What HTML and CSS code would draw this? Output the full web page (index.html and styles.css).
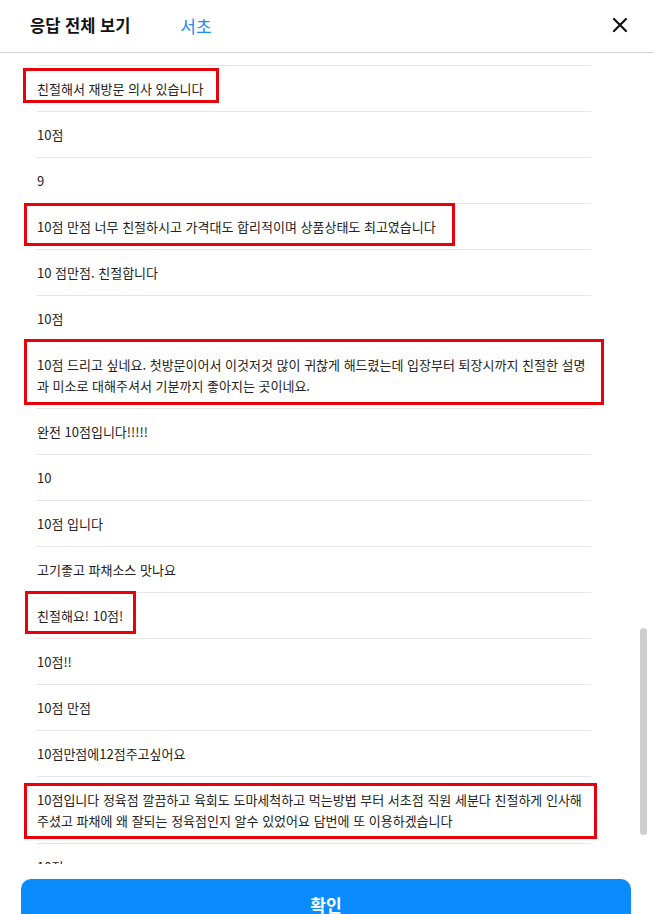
FILE: index.html
```html
<!DOCTYPE html>
<html lang="ko">

<head>
  <meta charset="UTF-8" />
  <title>응답 전체 보기</title>
  <meta name="viewport" content="width=device-width, initial-scale=1.0" />
  <link rel="stylesheet" href="styles.css">
</head>

<body>

  <div class="modal">
    <div class="modal-header">
      <h2>응답 전체 보기</h2>
      <span class="branch">서초</span>
      <button class="close-btn" aria-label="닫기">
        <svg width="16" height="16" viewBox="0 0 16 16">
          <path d="M2 2 L14 14 M14 2 L2 14" stroke="#111" stroke-width="2.2" stroke-linecap="round" fill="none" />
        </svg>
      </button>
    </div>

    <div class="answers">
      <ul class="answer-list">
        <li class="answer spacer"></li>
        <li class="answer">친절해서 재방문 의사 있습니다<span class="mark mark-1"></span></li>
        <li class="answer">10점</li>
        <li class="answer">9</li>
        <li class="answer">10점 만점 너무 친절하시고 가격대도 합리적이며 상품상태도 최고였습니다<span class="mark mark-2"></span></li>
        <li class="answer">10 점만점. 친절합니다</li>
        <li class="answer">10점</li>
        <li class="answer">10점 드리고 싶네요. 첫방문이어서 이것저것 많이 귀찮게 해드렸는데 입장부터 퇴장시까지 친절한 설명과 미소로 대해주셔서 기분까지 좋아지는 곳이네요.<span class="mark mark-3"></span></li>
        <li class="answer">완전 10점입니다!!!!!</li>
        <li class="answer">10</li>
        <li class="answer">10점 입니다</li>
        <li class="answer">고기좋고 파채소스 맛나요</li>
        <li class="answer">친절해요! 10점!<span class="mark mark-4"></span></li>
        <li class="answer">10점!!</li>
        <li class="answer">10점 만점</li>
        <li class="answer">10점만점에12점주고싶어요</li>
        <li class="answer">10점입니다 정육점 깔끔하고 육회도 도마세척하고 먹는방법 부터 서초점 직원 세분다 친절하게 인사해주셨고 파채에 왜 잘되는 정육점인지 알수 있었어요 담번에 또 이용하겠습니다<span class="mark mark-5"></span></li>
        <li class="answer">10점</li>
      </ul>
      <div class="scroll-thumb"></div>
    </div>

    <div class="modal-footer">
      <button class="confirm-btn">확인</button>
    </div>
  </div>

</body>

</html>
```

FILE: styles.css
```css
* {
  box-sizing: border-box;
}

body {
  margin: 0;
  padding: 0;
  font-family: "Noto Sans CJK KR", "Noto Sans", sans-serif;
  background-color: #fff;
  color: #222;
}

.modal {
  width: 654px;
  height: 914px;
  display: flex;
  flex-direction: column;
  overflow: hidden;
}

.modal-header {
  height: 53px;
  flex-shrink: 0;
  display: flex;
  align-items: center;
  padding: 0 22px 2px 30px;
  border-bottom: 1px solid #d4d4d4;
}

.modal-header h2 {
  margin: 0;
  font-size: 16.5px;
  font-weight: 700;
  color: #111;
}

.branch {
  margin-left: 50px;
  font-size: 17px;
  color: #1a8cf0;
}

.close-btn {
  margin-left: auto;
  width: 24px;
  height: 24px;
  padding: 0;
  border: none;
  background: none;
  display: flex;
  align-items: center;
  justify-content: center;
  cursor: pointer;
}

.answers {
  position: relative;
  height: 811px;
  flex-shrink: 0;
  overflow: hidden;
}

.answer-list {
  list-style: none;
  margin: 0;
  padding: 0 63px 0 37px;
}

.answer {
  position: relative;
  padding: 12px 0;
  line-height: 21px;
  font-size: 13px;
  color: #222;
  border-bottom: 1px solid #e6e6e6;
}

.answer.spacer {
  height: 13px;
  padding: 0;
}

/* red highlight boxes */
.mark {
  position: absolute;
  border: 3px solid #e8000b;
  pointer-events: none;
}

.mark-1 {
  left: -14px;
  top: 2px;
  width: 196px;
  height: 35px;
}

.mark-2 {
  left: -13px;
  top: -1px;
  width: 431px;
  height: 43px;
}

.mark-3 {
  left: -13px;
  top: -3px;
  width: 580px;
  height: 66px;
}

.mark-4 {
  left: -12px;
  top: -2px;
  width: 111px;
  height: 43px;
}

.mark-5 {
  left: -13px;
  top: 6px;
  width: 573px;
  height: 56px;
}

.scroll-thumb {
  position: absolute;
  right: 7px;
  top: 575px;
  width: 7px;
  height: 207px;
  border-radius: 4px;
  background-color: #cdcdd2;
}

.modal-footer {
  flex-shrink: 0;
  padding: 15px 23px 0 21px;
}

.confirm-btn {
  width: 100%;
  height: 50px;
  padding: 0;
  font-family: inherit;
  font-size: 17px;
  font-weight: 700;
  line-height: 1;
  background-color: #0a8cff;
  color: white;
  border: none;
  border-radius: 10px;
  cursor: pointer;
}
```
